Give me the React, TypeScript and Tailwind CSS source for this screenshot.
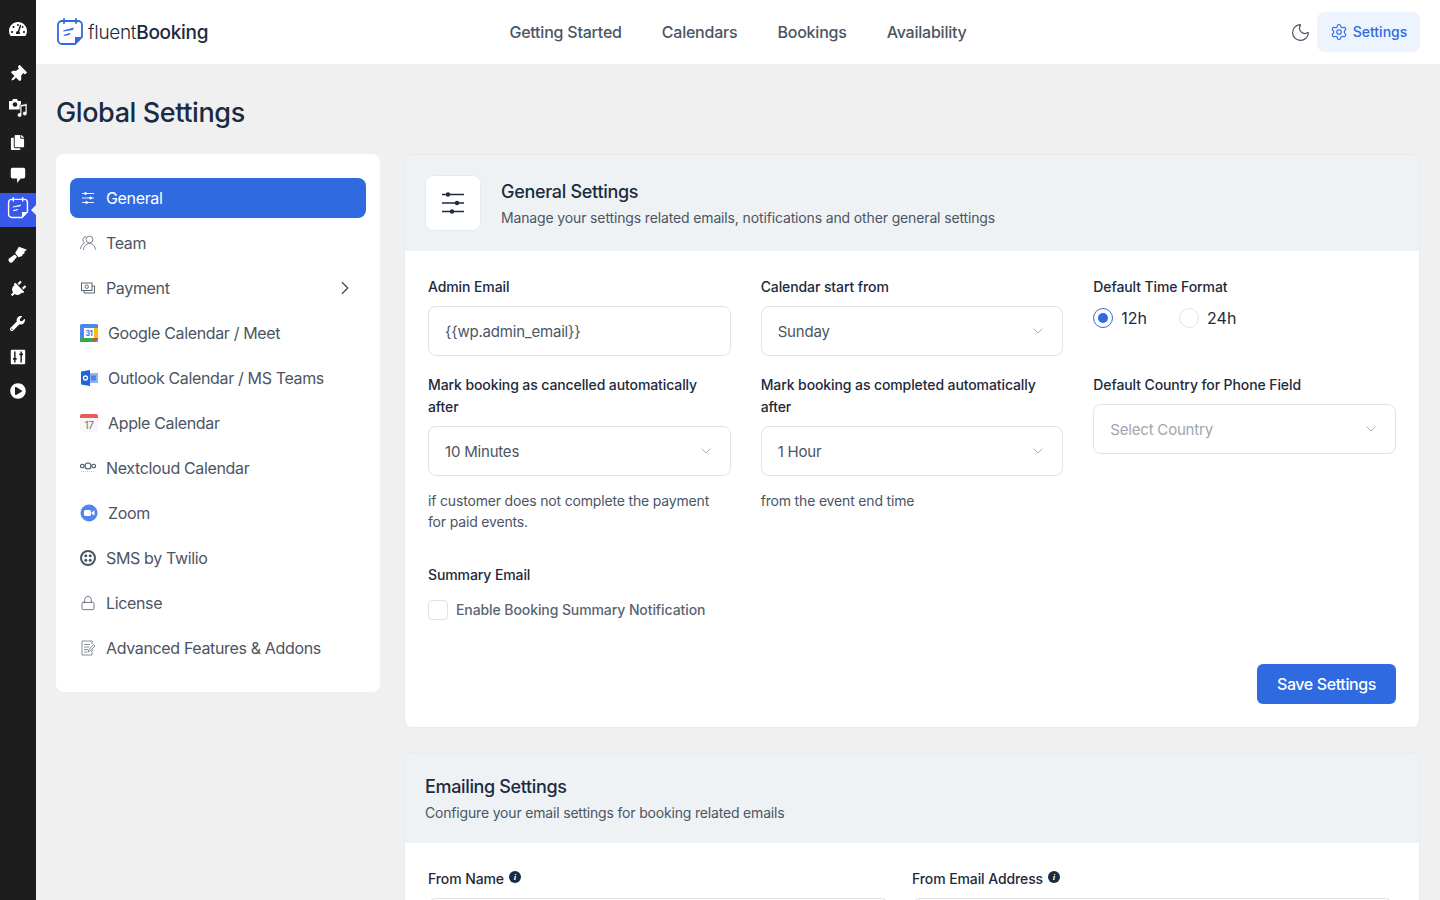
import { ChevronDown, ChevronRight, Lock, Moon, Settings } from "lucide-react";
import type { ReactNode } from "react";
import { FaCopy, FaPlug, FaPlayCircle, FaTachometerAlt, FaThumbtack, FaWrench } from "react-icons/fa";

const font = { fontFamily: "Inter, 'Noto Sans', sans-serif" };

function BrandMark({ className, color = "#2f6ae0" }: { className: string; color?: string }) {
  return (
    <svg viewBox="0 0 28 28" className={className} fill="none">
      <path d="M6 3h16a4 4 0 0 1 4 4v12l-7 7H6a4 4 0 0 1-4-4V7a4 4 0 0 1 4-4z" stroke={color} strokeWidth="1.8" />
      <path d="M8 1v4M20 1v4" stroke={color} strokeWidth="1.8" strokeLinecap="round" />
      <path d="M19 26v-7h7z" fill={color} />
      <path d="M7 12.500l11-3-1.200 2.400-9.300 1.600zM7.500 17l7-2.200-1.100 2.200-5.500 1z" fill={color} />
    </svg>
  );
}

function MediaIcon() {
  return (
    <svg viewBox="0 0 20 20" className="h-[20px] w-[20px]" fill="white">
      <path d="M1 3h3l1-2h4l1 2h3v8.500H1z" />
      <circle cx="7" cy="6.500" r="2.300" fill="#1d1d1d" />
      <path d="M12 12.500V7l7-1.500v10a2.200 2.200 0 1 1-1.800-2.100V8l-3.400.8V17a2.200 2.200 0 1 1-1.800-2.100z" stroke="#1d1d1d" strokeWidth="0.6" />
    </svg>
  );
}

function CommentIcon() {
  return (
    <svg viewBox="0 0 20 20" className="h-[18px] w-[18px]" fill="white">
      <path d="M4 2h12a2 2 0 0 1 2 2v8a2 2 0 0 1-2 2h-3l-4 5v-5H4a2 2 0 0 1-2-2V4a2 2 0 0 1 2-2z" />
    </svg>
  );
}

function BrushIcon() {
  return (
    <svg viewBox="0 0 20 20" className="h-[19px] w-[19px] -translate-y-[2px]" fill="white">
      <path d="M1.500 15 7 11l2.500 2.500L5 19a2.200 2.200 0 0 1-3.500-4z" />
      <path d="M7.500 9.500 11.500 3 20 6l-2.500 2-.5 2.500-1.500 0-.5 2-4 1.500z" />
    </svg>
  );
}

function SlidersBoxIcon() {
  return (
    <svg viewBox="0 0 20 20" className="h-[18px] w-[18px]">
      <rect x="2" y="2" width="16" height="16" rx="1" fill="white" />
      <path d="M6.500 4v12M13.500 4v12" stroke="#1d1d1d" strokeWidth="1.600" />
      <path d="M4.500 12h4M11.500 7h4" stroke="#1d1d1d" strokeWidth="2" />
    </svg>
  );
}

function AdminRail() {
  const cell = "flex h-[34px] items-center justify-center pr-[1px] text-white";
  return (
    <aside className="flex w-9 shrink-0 flex-col bg-[#1d1d1d] pt-3">
      <div className={cell}><FaTachometerAlt size={18} /></div>
      <div className="h-[11px]" />
      <div className={cell}><FaThumbtack size={17} className="rotate-45" /></div>
      <div className={cell}><MediaIcon /></div>
      <div className={cell}><FaCopy size={15} /></div>
      <div className={`${cell} -translate-y-[1px]`}><CommentIcon /></div>
      <div className={`${cell} relative bg-[#3858e9]`}>
        <BrandMark className="h-[22px] w-[22px] -translate-y-[2px]" color="white" />
        <span className="absolute right-0 top-[12px] h-0 w-0 border-y-[5px] border-r-[5px] border-y-transparent border-r-[#f0f0f1]" />
      </div>
      <div className="h-[11px]" />
      <div className={cell}><BrushIcon /></div>
      <div className={cell}><FaPlug size={17} className="rotate-45" /></div>
      <div className={cell}><FaWrench size={15} /></div>
      <div className={cell}><SlidersBoxIcon /></div>
      <div className={cell}><FaPlayCircle size={16} /></div>
    </aside>
  );
}

function TopBar() {
  return (
    <header className="flex h-16 shrink-0 items-center bg-white px-5">
      <div className="flex flex-1 items-center gap-[4px]">
        <BrandMark className="h-7 w-7" />
        <span className="text-[19px] leading-none tracking-[-0.3px] text-[#1e293b]">
          <span className="font-light">fluent</span>
          <span className="font-medium">Booking</span>
        </span>
      </div>
      <nav className="flex items-center gap-10 text-base font-medium tracking-[-0.22px] text-[#4b5563]">
        <span>Getting Started</span>
        <span>Calendars</span>
        <span>Bookings</span>
        <span>Availability</span>
      </nav>
      <div className="flex flex-1 items-center justify-end gap-[6px]">
        <Moon size={21} strokeWidth={1.4} className="text-[#4b5563]" />
        <div className="flex h-10 w-[103px] items-center justify-center gap-[5px] rounded-lg bg-[#edf4fd] text-sm font-medium text-[#2f6ae0]">
          <Settings size={18} strokeWidth={1.5} />
          Settings
        </div>
      </div>
    </header>
  );
}

const sm = "h-4 w-4 text-[#5b6472]";

const navItems: { label: string; icon: ReactNode; chevron?: boolean }[] = [
  {
    label: "Team",
    icon: (
      <svg viewBox="0 0 16 16" className={sm} fill="none" stroke="currentColor" strokeWidth="0.8">
        <circle cx="9.500" cy="4.500" r="3.400" />
        <path d="M3.500 15c0-3.500 2.500-6.500 6-6.500s5.500 2.500 6 6M6 1.500A3.500 3.500 0 0 0 4.500 8C2.500 9 .8 11 .5 14" />
      </svg>
    ),
  },
  {
    label: "Payment",
    chevron: true,
    icon: (
      <svg viewBox="0 0 16 16" className={sm} fill="none" stroke="currentColor" strokeWidth="1">
        <rect x="1.500" y="3" width="10.500" height="7.500" />
        <circle cx="6.700" cy="6.700" r="1.700" />
        <path d="M12 6h2.500v7H4v-2.500" />
      </svg>
    ),
  },
  {
    label: "Google Calendar / Meet",
    icon: (
      <svg viewBox="0 0 18 18" className="h-[18px] w-[18px]">
        <rect width="18" height="18" rx="1.500" fill="#4f86ec" />
        <rect x="4" y="4" width="10" height="10" fill="white" />
        <rect x="14" y="4" width="4" height="10" fill="#fbbc04" />
        <rect y="14" width="14" height="4" fill="#34a853" />
        <path d="M14 14h4l-4 4z" fill="#ea4335" />
        <text x="9" y="12" textAnchor="middle" fontSize="7" fontWeight="700" fill="#2f6ae0" fontFamily="Inter">31</text>
      </svg>
    ),
  },
  {
    label: "Outlook Calendar / MS Teams",
    icon: (
      <svg viewBox="0 0 18 18" className="h-[18px] w-[18px]">
        <rect x="8" y="4" width="10" height="10" fill="#8fb4ee" />
        <path d="M1 2.500 10 1v16l-9-1.500z" fill="#1f65d6" />
        <circle cx="5.500" cy="9" r="2" fill="none" stroke="white" strokeWidth="1.300" />
        <rect x="11" y="6.500" width="5" height="5" fill="#2f6ae0" opacity="0.7" />
      </svg>
    ),
  },
  {
    label: "Apple Calendar",
    icon: (
      <svg viewBox="0 0 18 18" className="h-[18px] w-[18px]">
        <rect width="18" height="18" rx="2" fill="#f7f7f7" />
        <path d="M0 4V2a2 2 0 0 1 2-2h14a2 2 0 0 1 2 2v2z" fill="#ea5b57" />
        <text x="9" y="15" textAnchor="middle" fontSize="10" fill="#6b7280" fontFamily="Inter">17</text>
      </svg>
    ),
  },
  {
    label: "Nextcloud Calendar",
    icon: (
      <svg viewBox="0 0 16 16" className="h-4 w-4" fill="none" stroke="#4b5563" strokeWidth="1.100">
        <circle cx="8" cy="6" r="3" />
        <circle cx="2.300" cy="6" r="1.800" />
        <circle cx="13.700" cy="6" r="1.800" />
        <path d="M1 11.500h14" stroke="#c4c8ce" strokeWidth="1" strokeDasharray="1 1" />
      </svg>
    ),
  },
  {
    label: "Zoom",
    icon: (
      <svg viewBox="0 0 18 18" className="h-[18px] w-[18px]">
        <circle cx="9" cy="9" r="8.500" fill="#4f86ec" />
        <rect x="4" y="6" width="7" height="6" rx="1.500" fill="white" />
        <path d="M11.500 8.500 14.500 6.300v5.400L11.500 9.500z" fill="white" />
      </svg>
    ),
  },
  {
    label: "SMS by Twilio",
    icon: (
      <svg viewBox="0 0 16 16" className="h-4 w-4" fill="#4b5563">
        <path fillRule="evenodd" d="M8 0a8 8 0 1 0 0 16A8 8 0 0 0 8 0zm0 2a6 6 0 1 1 0 12A6 6 0 0 1 8 2z" />
        <circle cx="5.800" cy="5.800" r="1.500" />
        <circle cx="10.200" cy="5.800" r="1.500" />
        <circle cx="5.800" cy="10.200" r="1.500" />
        <circle cx="10.200" cy="10.200" r="1.500" />
      </svg>
    ),
  },
  { label: "License", icon: <Lock className={sm} strokeWidth={1.3} /> },
  {
    label: "Advanced Features & Addons",
    icon: (
      <svg viewBox="0 0 16 16" className="h-4 w-4" fill="none" stroke="#7b8390" strokeWidth="0.9">
        <path d="M12 9v6H2V1h10v3" />
        <path d="M4 4.500h6M4 7h5M4 9.500h4M4 12h3" />
        <path d="M8 12l.5-2L13.500 4.500l1.500 1.500L10 11z" />
      </svg>
    ),
  },
];

function SideMenu() {
  return (
    <div className="w-[324px] shrink-0 self-start rounded-lg bg-white px-[14px] py-6">
      <div className="flex flex-col gap-[5px] text-base tracking-[-0.35px] text-[#4b5563]">
        <div className="flex h-10 items-center gap-[10px] rounded-lg bg-[#2f6ae0] px-[10px] text-white">
          <svg viewBox="0 0 16 16" className="h-4 w-4" fill="white" stroke="white">
            <path d="M2 3.500h12M2 8h12M2 12.500h12" strokeWidth="0.900" />
            <circle cx="5.500" cy="3.500" r="1" />
            <circle cx="10.500" cy="8" r="1" />
            <circle cx="6.500" cy="12.500" r="1" />
          </svg>
          General
        </div>
        {navItems.map((item) => (
          <div key={item.label} className="flex h-10 items-center gap-[10px] px-[10px]">
            {item.icon}
            <span className="flex-1">{item.label}</span>
            {item.chevron && <ChevronRight size={22} strokeWidth={1.2} className="text-[#374151]" />}
          </div>
        ))}
      </div>
    </div>
  );
}

function Label({ children }: { children: ReactNode }) {
  return <label className="mb-2 block text-sm font-medium leading-[22px] tracking-[-0.1px] text-[#1e293b]">{children}</label>;
}

function Select({ value, placeholder }: { value: string; placeholder?: boolean }) {
  return (
    <div
      className={`flex h-[50px] items-center justify-between rounded-lg border border-[#dfe2e8] bg-white pl-4 pr-[16px] text-[15px] tracking-[-0.2px] ${
        placeholder ? "text-[#a0a5af]" : "text-[#4b5563]"
      }`}
    >
      <span className="pt-[2px]">{value}</span>
      <ChevronDown size={16} strokeWidth={1.1} className="text-[#8b919c]" />
    </div>
  );
}

function Radio({ on, label }: { on?: boolean; label: string }) {
  return (
    <div className="flex items-center gap-2 text-base text-[#1e293b]">
      <span
        className={`flex h-5 w-5 items-center justify-center rounded-full border bg-white ${
          on ? "border-[#2f6ae0]" : "border-[#dfe2e8]"
        }`}
      >
        {on && <span className="h-[10px] w-[10px] rounded-full bg-[#2f6ae0]" />}
      </span>
      {label}
    </div>
  );
}

function GeneralCard() {
  return (
    <section className="overflow-hidden rounded-lg border border-[#e6e9ee] bg-white">
      <div className="flex h-[96px] items-center gap-5 bg-[#eff2f5] px-5">
        <div className="flex h-14 w-14 items-center justify-center rounded-lg border border-[#e6e9ee] bg-white">
          <svg viewBox="0 0 24 24" className="h-6 w-6" fill="#1b2b41" stroke="#1b2b41">
            <path d="M1 3.500h22M1 12h22M1 20.500h22" strokeWidth="1.500" />
            <circle cx="7" cy="3.500" r="2.200" stroke="none" />
            <circle cx="16" cy="12" r="2.200" stroke="none" />
            <circle cx="11" cy="20.500" r="2.200" stroke="none" />
          </svg>
        </div>
        <div>
          <h2 className="text-lg font-medium leading-7 tracking-[-0.3px] text-[#1b2b41]">General Settings</h2>
          <p className="mt-[2px] text-sm leading-5 tracking-[-0.14px] text-[#4b5563]">
            Manage your settings related emails, notifications and other general settings
          </p>
        </div>
      </div>
      <div className="px-[23px] pb-[23px] pt-[25px]">
        <div className="grid grid-cols-3 items-start gap-x-[30px] gap-y-[18px]">
          <div>
            <Label>Admin Email</Label>
            <div className="flex h-[50px] items-center rounded-lg border border-[#dfe2e8] bg-white px-4 text-[15px] tracking-[-0.2px] text-[#4b5563]">
              <span className="pt-[2px]">{"{{wp.admin_email}}"}</span>
            </div>
          </div>
          <div>
            <Label>Calendar start from</Label>
            <Select value="Sunday" />
          </div>
          <div>
            <Label>Default Time Format</Label>
            <div className="flex gap-8">
              <Radio on label="12h" />
              <Radio label="24h" />
            </div>
          </div>
          <div>
            <Label>
              Mark booking as cancelled automatically
              <br />
              after
            </Label>
            <Select value="10 Minutes" />
            <p className="mt-[14px] text-sm leading-[21px] tracking-[-0.17px] text-[#4b5563]">
              if customer does not complete the payment for paid events.
            </p>
          </div>
          <div>
            <Label>
              Mark booking as completed automatically
              <br />
              after
            </Label>
            <Select value="1 Hour" />
            <p className="mt-[14px] text-sm leading-[21px] tracking-[-0.17px] text-[#4b5563]">from the event end time</p>
          </div>
          <div>
            <Label>Default Country for Phone Field</Label>
            <Select value="Select Country" placeholder />
          </div>
        </div>
        <div className="mt-8">
          <Label>Summary Email</Label>
          <div className="mt-[14px] flex items-center gap-[8px] text-sm font-medium tracking-[-0.09px] text-[#5b6472]">
            <span className="h-5 w-5 rounded border border-[#dfe2e8] bg-white" />
            Enable Booking Summary Notification
          </div>
        </div>
        <div className="mt-[44px] flex justify-end">
          <button className="h-10 w-[139px] rounded-md bg-[#2f6ae0] text-base font-medium tracking-[-0.38px] text-white">
            Save Settings
          </button>
        </div>
      </div>
    </section>
  );
}

function InfoDot() {
  return (
    <span
      className="flex h-[12px] w-[12px] -translate-y-[2px] items-center justify-center rounded-full bg-[#1b2b41] text-[9px] font-bold italic leading-none text-white"
      style={{ fontFamily: "'Liberation Serif', serif" }}
    >
      i
    </span>
  );
}

function EmailCard() {
  return (
    <section className="mt-[25px] rounded-t-lg border border-[#e6e9ee] bg-white">
      <div className="h-[89px] rounded-t-lg bg-[#eff2f5] px-5 pt-[19px]">
        <h2 className="text-lg font-medium leading-7 tracking-[-0.35px] text-[#1b2b41]">Emailing Settings</h2>
        <p className="mt-[2px] text-sm leading-5 tracking-[-0.18px] text-[#4b5563]">Configure your email settings for booking related emails</p>
      </div>
      <div className="grid grid-cols-[461px_1fr] gap-x-[23px] pl-[23px] pr-[26px] pt-[25px]">
        {["From Name", "From Email Address"].map((label) => (
          <div key={label}>
            <div className="mb-2 flex items-center gap-[5px] text-sm font-medium leading-[22px] tracking-[-0.1px] text-[#1e293b]">
              {label}
              <InfoDot />
            </div>
            <div className="h-[50px] rounded-lg border border-[#dfe2e8]" />
          </div>
        ))}
      </div>
    </section>
  );
}

export default function App() {
  return (
    <div className="flex h-[900px] overflow-hidden bg-[#f0f0f1]" style={font}>
      <AdminRail />
      <div className="flex min-w-0 flex-1 flex-col">
        <TopBar />
        <main className="px-5">
          <h1 className="pb-[22px] pt-[30px] text-[27px] font-medium leading-[38px] tracking-[-0.4px] text-[#1b2b41]">Global Settings</h1>
          <div className="flex gap-6">
            <SideMenu />
            <div className="min-w-0 flex-1">
              <GeneralCard />
              <EmailCard />
            </div>
          </div>
        </main>
      </div>
    </div>
  );
}
